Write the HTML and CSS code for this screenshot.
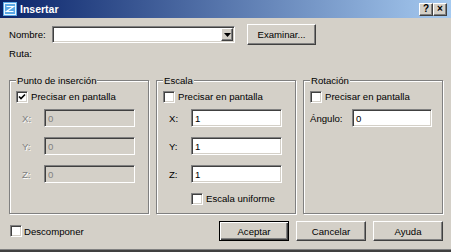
FILE: index.html
```html
<!DOCTYPE html>
<html lang="es">
<head>
    <meta charset="UTF-8">
    <title>Insertar</title>
    <link rel="stylesheet" href="styles.css">
</head>
<body>
    <div class="window">
        <div class="titlebar">
            <svg class="app-icon" width="14" height="14" viewBox="0 0 14 14">
                <rect x="0" y="0" width="14" height="14" fill="#5aa8e6"/>
                <rect x="1.5" y="1.5" width="11" height="11" fill="none" stroke="#eaf6ff" stroke-width="1"/>
                <polyline points="3.5,4.5 10.5,4.5 3.5,9.5 10.5,9.5" fill="none" stroke="#ffffff" stroke-width="1.2"/>
            </svg>
            <span class="title">Insertar</span>
            <div class="caption-buttons">
                <span class="cap-btn">?</span>
                <span class="cap-btn">×</span>
            </div>
        </div>

        <div class="content">
            <div class="name-row">
                <span class="name-label">Nombre:</span>
                <div class="combo">
                    <div class="combo-field"></div>
                    <span class="combo-arrow">
                        <svg width="7" height="4" viewBox="0 0 7 4"><polygon points="0,0 7,0 3.5,4" fill="#000"/></svg>
                    </span>
                </div>
                <div class="btn browse">Examinar...</div>
            </div>

            <div class="path-row">Ruta:</div>

            <div class="groups">
                <fieldset class="group">
                    <legend>Punto de inserción</legend>
                    <div class="check-row">
                        <span class="check checked">
                            <svg width="8" height="8" viewBox="0 0 8 8"><polyline points="1,3.5 3,5.5 7,1.5" fill="none" stroke="#000" stroke-width="1.6"/></svg>
                        </span>
                        <span>Precisar en pantalla</span>
                    </div>
                    <div class="coord-row disabled">
                        <span class="coord-label">X:</span>
                        <span class="field">0</span>
                    </div>
                    <div class="coord-row disabled">
                        <span class="coord-label">Y:</span>
                        <span class="field">0</span>
                    </div>
                    <div class="coord-row disabled">
                        <span class="coord-label">Z:</span>
                        <span class="field">0</span>
                    </div>
                </fieldset>

                <fieldset class="group">
                    <legend>Escala</legend>
                    <div class="check-row">
                        <span class="check"></span>
                        <span>Precisar en pantalla</span>
                    </div>
                    <div class="coord-row">
                        <span class="coord-label">X:</span>
                        <span class="field">1</span>
                    </div>
                    <div class="coord-row">
                        <span class="coord-label">Y:</span>
                        <span class="field">1</span>
                    </div>
                    <div class="coord-row">
                        <span class="coord-label">Z:</span>
                        <span class="field">1</span>
                    </div>
                    <div class="check-row uniform">
                        <span class="check"></span>
                        <span>Escala uniforme</span>
                    </div>
                </fieldset>

                <fieldset class="group rotation">
                    <legend>Rotación</legend>
                    <div class="check-row">
                        <span class="check"></span>
                        <span>Precisar en pantalla</span>
                    </div>
                    <div class="coord-row angle-row">
                        <span class="coord-label">Ángulo:</span>
                        <span class="field">0</span>
                    </div>
                </fieldset>
            </div>

            <div class="footer">
                <div class="check-row explode">
                    <span class="check"></span>
                    <span>Descomponer</span>
                </div>
                <div class="dialog-buttons">
                    <div class="btn default">Aceptar</div>
                    <div class="btn">Cancelar</div>
                    <div class="btn">Ayuda</div>
                </div>
            </div>
        </div>
    </div>
</body>
</html>
```

FILE: styles.css
```css
* {
    margin: 0;
    padding: 0;
    box-sizing: border-box;
}

body {
    background-color: #d4d0c8;
    font-family: "Liberation Sans", Arial, sans-serif;
    font-size: 9.6px;
    color: #000;
}

.window {
    width: 451px;
    height: 252px;
    background-color: #d4d0c8;
    border-bottom: 2px solid #404040;
    box-shadow: inset 0 -1px 0 #808080;
}

/* barra de título */
.titlebar {
    height: 18px;
    display: flex;
    align-items: center;
    padding: 0 4px 0 3px;
    background: linear-gradient(to right, #0a246a, #a6caf0);
}

.app-icon {
    display: block;
    margin-right: 3px;
}

.title {
    color: #fff;
    font-weight: bold;
    font-size: 10.5px;
}

.caption-buttons {
    margin-left: auto;
    display: flex;
}

.cap-btn {
    width: 14px;
    height: 13px;
    display: flex;
    align-items: center;
    justify-content: center;
    background-color: #d4d0c8;
    border: 1px solid;
    border-color: #fff #404040 #404040 #fff;
    box-shadow: inset -1px -1px 0 #808080;
    font-weight: bold;
    font-size: 10px;
    line-height: 1;
}

/* contenido */
.content {
    padding: 6px 8px 0 9px;
}

.name-row {
    display: flex;
    align-items: center;
    height: 21px;
}

.name-label {
    width: 43px;
}

.combo {
    width: 183px;
    height: 17px;
    display: flex;
    background-color: #fff;
    border: 1px solid;
    border-color: #808080 #fff #fff #808080;
    box-shadow: inset 1px 1px 0 #404040, inset -1px -1px 0 #d4d0c8;
    padding: 1px;
}

.combo-field {
    flex: 1;
}

.combo-arrow {
    width: 12px;
    height: 13px;
    display: flex;
    align-items: center;
    justify-content: center;
    background-color: #d4d0c8;
    border: 1px solid;
    border-color: #fff #404040 #404040 #fff;
    box-shadow: inset -1px -1px 0 #808080;
}

.btn {
    width: 70px;
    height: 20px;
    display: flex;
    align-items: center;
    justify-content: center;
    background-color: #d4d0c8;
    border: 1px solid;
    border-color: #fff #404040 #404040 #fff;
    box-shadow: inset -1px -1px 0 #808080;
}

.btn.browse {
    width: 69px;
    height: 21px;
    margin-left: 12px;
}

.btn.default {
    border-color: #000;
    box-shadow: inset 1px 1px 0 #fff, inset -1px -1px 0 #404040, inset -2px -2px 0 #808080;
}

.path-row {
    margin-top: 2px;
    line-height: 13px;
}

/* grupos */
.groups {
    display: flex;
    gap: 7px;
    margin-top: 14px;
}

.group {
    width: 140px;
    height: 140px;
    border: 1px solid #808080;
    box-shadow: 1px 1px 0 #fff, inset 1px 1px 0 #fff;
    padding: 3px 6px 0;
}

.group legend {
    padding: 0 1px;
    line-height: 13px;
    background-color: #d4d0c8;
}

.check-row {
    display: flex;
    align-items: center;
    height: 13px;
    gap: 3px;
}

.check {
    width: 12px;
    height: 12px;
    display: flex;
    align-items: center;
    justify-content: center;
    background-color: #fff;
    border: 1px solid;
    border-color: #808080 #fff #fff #808080;
    box-shadow: inset 1px 1px 0 #404040, inset -1px -1px 0 #d4d0c8;
}

.check-row.uniform {
    margin-top: 9px;
    margin-left: 28px;
}

.coord-row {
    display: flex;
    align-items: center;
    height: 18px;
    margin-top: 10px;
}

.check-row + .coord-row {
    margin-top: 6px;
}

.coord-label {
    width: 28px;
    padding-left: 6px;
}

.field {
    width: 91px;
    height: 18px;
    display: flex;
    align-items: center;
    padding-left: 3px;
    background-color: #fff;
    border: 1px solid;
    border-color: #808080 #fff #fff #808080;
    box-shadow: inset 1px 1px 0 #404040, inset -1px -1px 0 #d4d0c8;
}

.disabled .coord-label {
    color: #808080;
    text-shadow: 1px 1px 0 #fff;
}

.disabled .field {
    background-color: #d4d0c8;
    color: #808080;
}

.angle-row .coord-label {
    width: 42px;
    padding-left: 0;
}

.angle-row .field {
    width: 80px;
}

/* pie */
.footer {
    display: flex;
    align-items: center;
    margin-top: 7px;
    height: 20px;
}

.check-row.explode {
    margin-left: 1px;
    gap: 2px;
}

.dialog-buttons {
    margin-left: auto;
    display: flex;
    gap: 7px;
}
```
